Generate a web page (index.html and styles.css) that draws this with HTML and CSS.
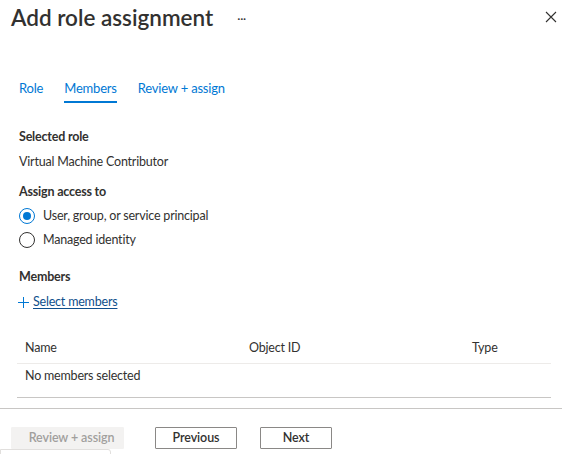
FILE: index.html
```html
<!DOCTYPE html>
<html>
<head>
<meta charset="utf-8">
<link rel="stylesheet" href="styles.css">
</head>
<body>
<div class="blade">
  <header class="head">
    <h1 class="title">Add role assignment</h1>
    <span class="more">···</span>
    <span class="spacer"></span>
    <svg class="close" width="12" height="12" viewBox="0 0 12 12"><path d="M1 1L11 11M11 1L1 11" stroke="#323130" stroke-width="1.1" fill="none"/></svg>
  </header>

  <nav class="tabs">
    <span class="tab">Role</span>
    <span class="tab active">Members</span>
    <span class="tab">Review + assign</span>
  </nav>

  <section class="content">
    <div class="label">Selected role</div>
    <div class="value">Virtual Machine Contributor</div>

    <div class="label label-access">Assign access to</div>
    <div class="radios">
      <div class="radio-row"><span class="radio checked"></span><span>User, group, or service principal</span></div>
      <div class="radio-row"><span class="radio"></span><span>Managed identity</span></div>
    </div>

    <div class="label label-members">Members</div>
    <div class="select-link">
      <svg class="plus" width="11" height="11" viewBox="0 0 11 11"><path d="M5.5 0V11M0 5.5H11" stroke="#0078d4" stroke-width="1" fill="none"/></svg>
      <span class="link">Select members</span>
    </div>

    <div class="grid">
      <div class="grid-row grid-head">
        <span class="c1">Name</span>
        <span class="c2">Object ID</span>
        <span class="c3">Type</span>
      </div>
      <div class="grid-row grid-body">
        <span class="c1">No members selected</span>
      </div>
    </div>
  </section>

  <footer class="foot">
    <button class="btn disabled">Review + assign</button>
    <button class="btn">Previous</button>
    <button class="btn">Next</button>
  </footer>
  <div class="peek"></div>
</div>
</body>
</html>
```

FILE: styles.css
```css
* { box-sizing: border-box; }
html, body {
  margin: 0;
  padding: 0;
  background: #ffffff;
}
body {
  font-family: Lato, "Noto Sans", sans-serif;
  color: #323130;
  width: 562px;
  height: 454px;
  overflow: hidden;
  letter-spacing: -0.2px;
}
.blade {
  position: relative;
  height: 454px;
}
.head {
  display: flex;
  align-items: center;
  height: 34px;
  padding: 0 5px 0 11px;
}
.title {
  margin: 0;
  font-size: 22.5px;
  font-weight: 600;
  color: #323130;
  line-height: 36px;
  letter-spacing: 0;
  padding-top: 1px;
}
.more {
  margin-left: 24px;
  font-size: 12px;
  color: #323130;
  padding-top: 2px;
}
.spacer { flex: 1; }
.tabs {
  display: flex;
  margin-top: 42px;
  padding-left: 19px;
  height: 28px;
}
.tab {
  font-size: 13px;
  color: #0078d4;
  line-height: 24px;
  margin-right: 21px;
}
.tab.active {
  border-bottom: 2px solid #0078d4;
  height: 27px;
}
.content {
  padding: 0 11px 0 19px;
}
.label {
  font-size: 12.5px;
  font-weight: 700;
  color: #323130;
  margin-top: 24px;
  line-height: 18px;
}
.value {
  font-size: 12.5px;
  margin-top: 7px;
  line-height: 18px;
}
.label-access { margin-top: 12px; }
.radios {
  display: flex;
  flex-direction: column;
  gap: 6px;
  margin-top: 6px;
}
.radio-row {
  display: flex;
  align-items: center;
  gap: 8px;
  font-size: 12.5px;
  line-height: 18px;
}
.radio {
  width: 16px;
  height: 16px;
  border-radius: 50%;
  border: 1px solid #323130;
  display: inline-flex;
  align-items: center;
  justify-content: center;
}
.radio.checked { border-color: #0078d4; }
.radio.checked::after {
  content: "";
  width: 8px;
  height: 8px;
  border-radius: 50%;
  background: #0078d4;
}
.label-members { margin-top: 19px; }
.select-link {
  display: flex;
  align-items: center;
  gap: 4px;
  margin-top: 7px;
  margin-left: -1px;
  font-size: 12.5px;
  line-height: 18px;
}
.link {
  color: #0f4f8c;
  text-decoration: underline;
  text-underline-offset: 2px;
}
.grid {
  margin: 23px 0 0 -2px;
}
.grid-row {
  display: grid;
  grid-template-columns: 224px 223px 1fr;
  padding-left: 8px;
  font-size: 12.5px;
  line-height: 18px;
}
.grid-head {
  height: 30px;
  padding-top: 5px;
  border-bottom: 1px solid #edebe9;
}
.grid-body {
  height: 34px;
  padding-top: 3px;
  border-bottom: 1px solid #c8c6c4;
}
.foot {
  margin-top: 10px;
  border-top: 1px solid #c8c6c4;
  display: flex;
  padding: 18px 0 0 11px;
}
.btn {
  font-family: inherit;
  font-size: 12.5px;
  font-weight: 600;
  letter-spacing: -0.1px;
  height: 22px;
  padding: 0;
  background: #ffffff;
  border: 1px solid #8a8886;
  border-radius: 1px;
  color: #323130;
  line-height: 18px;
}
.btn.disabled {
  width: 113px;
  background: #f3f2f1;
  border-color: #f3f2f1;
  color: #a19f9d;
  margin-right: 31px;
  padding-left: 8px;
}
.btn:nth-child(2) { width: 82px; margin-right: 23px; }
.btn:nth-child(3) { width: 72px; }
.peek {
  position: absolute;
  left: 0;
  top: 449px;
  width: 111px;
  height: 10px;
  border: 1px solid #e1dfdd;
  border-radius: 0 3px 0 0;
  background: #fff;
}
```
